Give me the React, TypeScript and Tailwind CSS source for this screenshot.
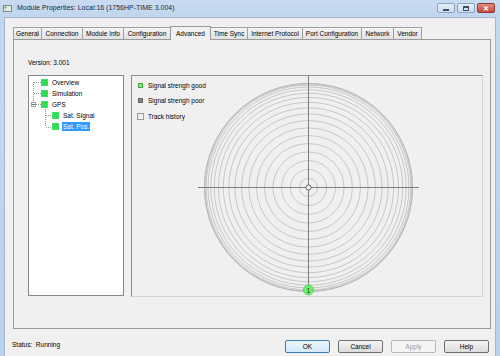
import React from "react";

const FONT = { fontFamily: '"Liberation Sans", Arial, sans-serif' };

const tabs: { label: string; w: string; active?: boolean }[] = [
  { label: "General", w: "w-[29px]" },
  { label: "Connection", w: "w-[42px]" },
  { label: "Module Info", w: "w-[42px]" },
  { label: "Configuration", w: "w-[48px]" },
  { label: "Advanced", w: "w-[41px]", active: true },
  { label: "Time Sync", w: "w-[38px]" },
  { label: "Internet Protocol", w: "w-[56px]" },
  { label: "Port Configuration", w: "w-[60px]" },
  { label: "Network", w: "w-[33px]" },
  { label: "Vendor", w: "w-[29px]" },
];

function Radar() {
  const cx = 176;
  const cy = 111;
  const rings = Array.from({ length: 18 }, (_, k) => 104 * Math.cos((k * 5 * Math.PI) / 180));
  return (
    <svg className="absolute inset-0" width="350" height="220" viewBox="0 0 350 220">
      {rings.map((r, i) => (
        <circle
          key={i}
          cx={cx + 0.5}
          cy={cy + 0.5}
          r={r}
          fill="none"
          stroke={i === 0 ? "#9c9c9c" : "#bdbdbd"}
          strokeWidth={0.8}
        />
      ))}
      <line x1={cx - 110} y1={cy + 0.5} x2={cx + 111} y2={cy + 0.5} stroke="#7c7c7c" strokeWidth={1} />
      <line x1={cx + 0.5} y1={0} x2={cx + 0.5} y2={215} stroke="#7c7c7c" strokeWidth={1} />
      <circle cx={cx + 0.5} cy={cy + 0.5} r={2.6} fill="#f0f0f0" stroke="#555" strokeWidth={0.9} />
      <circle cx={cx + 0.5} cy={214} r={5} fill="#6cf06c" stroke="#52c852" strokeWidth={0.8} />
      <text x={cx + 0.5} y={216.6} fontSize="7" textAnchor="middle" fill="#1a3a1a" style={FONT}>
        1
      </text>
    </svg>
  );
}

function TreeLines() {
  return (
    <svg className="absolute inset-0" width="94" height="219" viewBox="0 0 94 219">
      <g stroke="#9a9a9a" strokeWidth={1} strokeDasharray="1 1" fill="none">
        <line x1={4.5} y1={6} x2={4.5} y2={26} />
        <line x1={5} y1={6.5} x2={12} y2={6.5} />
        <line x1={5} y1={17.5} x2={12} y2={17.5} />
        <line x1={7} y1={28.5} x2={12} y2={28.5} />
        <line x1={16.5} y1={33} x2={16.5} y2={51} />
        <line x1={17} y1={39.5} x2={23} y2={39.5} />
        <line x1={17} y1={51.5} x2={23} y2={51.5} />
      </g>
      <rect x={2.5} y={26.5} width={4} height={4} fill="#fff" stroke="#8a8a8a" strokeWidth={0.8} />
      <line x1={3.2} y1={28.5} x2={5.8} y2={28.5} stroke="#333" strokeWidth={0.8} />
    </svg>
  );
}

function TreeItem({ label, child, selected }: { label: string; child?: boolean; selected?: boolean }) {
  return (
    <div className={`flex h-[11px] items-center ${child ? "pl-[23px]" : "pl-[12px]"}`}>
      <div className="h-[7px] w-[7px] bg-[#2fdc55] border border-[#3fe064]" />
      <div
        className={`ml-[3px] px-[1px] leading-[8px] h-[9px] flex items-center ${
          selected ? "bg-[#3399ff] text-white" : "text-black"
        }`}
      >
        {label}
      </div>
    </div>
  );
}

function WinBtn({ label, variant }: { label: string; variant?: "default" | "disabled" }) {
  const base = "h-[13px] w-[45px] flex items-center justify-center rounded-[2px] border text-[6.5px]";
  const cls =
    variant === "default"
      ? "border-[#3c7fb1] bg-gradient-to-b from-[#eaf6fd] to-[#d4ebf8] text-black"
      : variant === "disabled"
      ? "border-[#b5b9bc] bg-[#f4f4f4] text-[#a0a0a0]"
      : "border-[#707070] bg-gradient-to-b from-[#f4f4f4] to-[#dcdcdc] text-black";
  return <div className={`${base} ${cls}`}>{label}</div>;
}

export default function App() {
  return (
    <div
      className="w-[500px] h-[356px] overflow-hidden flex flex-col bg-gradient-to-b from-[#c3d7ef] to-[#bcd2ec]"
      style={FONT}
    >
      {/* Title bar */}
      <div className="h-[17px] flex items-start justify-between pl-[3px] pr-[5px] bg-gradient-to-b from-[#c9dbf1] to-[#c0d5ee]">
        <div className="flex items-center h-[16px]">
          <svg width="9" height="7" viewBox="0 0 9 7" className="mt-[1px]">
            <rect x="0.5" y="0.5" width="8" height="6" fill="#e8ece8" stroke="#7d8a80" />
            <rect x="1.5" y="1.5" width="2" height="2" fill="#56b85a" />
          </svg>
          <span className="ml-[5px] text-[7px] text-[#1e2a3a]">Module Properties: Local:16 (1756HP-TIME 3.004)</span>
        </div>
        <div className="flex gap-[2px] mt-[3px]">
          <div className="w-[18px] h-[10px] rounded-[2px] border border-[#8ca4c4] bg-gradient-to-b from-[#e6eef8] to-[#cfdcee] flex items-center justify-center">
            <div className="w-[6px] h-[2px] bg-[#3d4f66] mt-[3px]" />
          </div>
          <div className="w-[18px] h-[10px] rounded-[2px] border border-[#8ca4c4] bg-gradient-to-b from-[#e6eef8] to-[#cfdcee] flex items-center justify-center">
            <div className="w-[6px] h-[5px] border border-[#3d4f66] border-t-2" />
          </div>
          <div className="w-[18px] h-[10px] rounded-[2px] border border-[#8e3a32] bg-gradient-to-b from-[#e08c7e] to-[#c7453a] flex items-center justify-center text-white text-[7px] font-bold leading-none">
            ✕
          </div>
        </div>
      </div>

      {/* Client */}
      <div className="flex-1 ml-[4px] mr-[4px] border-l border-t border-r border-[#a5b7cd] bg-[#f0f0f0] flex flex-col pl-[8px] pr-[4px] pt-[8px]">
        {/* Tab strip */}
        <div className="flex items-end h-[13px] text-[6.5px]">
          {tabs.map((t, i) =>
            t.active ? (
              <div
                key={i}
                className={`${t.w} h-[14px] -ml-px relative z-10 -mb-px border border-b-0 border-[#9a9a9a] bg-[#f0f0f0] flex items-center justify-center text-black`}
              >
                {t.label}
              </div>
            ) : (
              <div
                key={i}
                className={`${t.w} h-[12px] ${i === 0 ? "" : "-ml-px"} border border-b-0 border-[#a0a0a0] bg-gradient-to-b from-[#f4f4f4] to-[#e2e2e2] flex items-center justify-center text-black`}
              >
                {t.label}
              </div>
            )
          )}
        </div>

        {/* Tab panel */}
        <div className="h-[290px] border border-[#9a9a9a] bg-[#f0f0f0] pl-[14px] pr-[7px] pt-[19px] text-[6.5px] text-black">
          <div className="h-[8px] leading-[8px]">Version: 3.001</div>
          <div className="mt-[8px] flex gap-[7px]">
            {/* Tree */}
            <div className="relative w-[96px] h-[221px] border border-[#828790] bg-white pt-[1px]">
              <TreeLines />
              <div className="relative">
                <TreeItem label="Overview" />
                <TreeItem label="Simulation" />
                <TreeItem label="GPS" />
                <TreeItem label="Sat. Signal" child />
                <TreeItem label="Sat. Pos." child selected />
              </div>
            </div>
            {/* Graph */}
            <div className="relative w-[352px] h-[222px] border border-t-[#8f8f8f] border-l-[#8f8f8f] border-r-[#d4d4d4] border-b-[#d4d4d4] bg-[#f0f0f0]">
              <Radar />
              <div className="relative pl-[6px] pt-[2px]">
                <div className="flex items-center h-[15px]">
                  <div className="w-[5px] h-[5px] bg-[#8be08b] border border-[#45a845]" />
                  <span className="ml-[5px]">Signal strengh good</span>
                </div>
                <div className="flex items-center h-[15px]">
                  <div className="w-[5px] h-[5px] bg-[#858585] border border-[#666]" />
                  <span className="ml-[5px]">Signal strengh poor</span>
                </div>
                <div className="flex items-center h-[17px]">
                  <div className="-ml-[1px] w-[7px] h-[7px] border border-[#9a9a9a] bg-gradient-to-br from-[#e4e4e4] to-[#fafafa]" />
                  <span className="ml-[4px]">Track history</span>
                </div>
              </div>
            </div>
          </div>
        </div>

        {/* Status row */}
        <div className="flex items-start justify-between pt-[11px] pr-[2px] text-[6.5px]">
          <div className="-ml-[1px] mt-[1px] leading-[8px]">Status:&nbsp;&nbsp;Running</div>
          <div className="flex gap-[8px]">
            <WinBtn label="OK" variant="default" />
            <WinBtn label="Cancel" />
            <WinBtn label="Apply" variant="disabled" />
            <WinBtn label="Help" />
          </div>
        </div>
      </div>
    </div>
  );
}
